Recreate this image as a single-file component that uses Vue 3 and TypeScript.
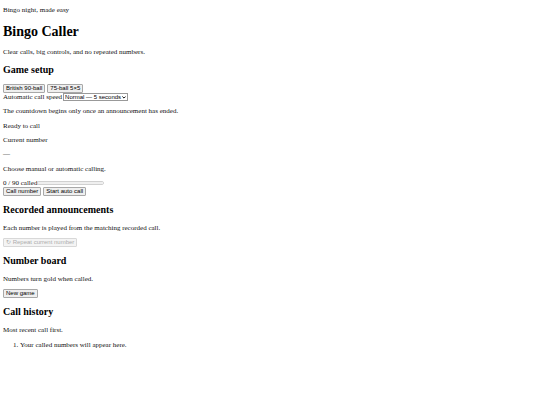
<script setup lang="ts">
import { computed, ref } from 'vue'

const modes = [
  { label: 'British 90-ball', total: 90 },
  { label: '75-ball 5×5', total: 75 },
]
const speeds = [
  { label: 'Fast — 3 seconds', value: 3 },
  { label: 'Normal — 5 seconds', value: 5 },
  { label: 'Slow — 8 seconds', value: 8 },
]

const total = ref(90)
const speed = ref(5)
const called = ref<number[]>([])
const current = computed(() => called.value[0] ?? null)

function newGame(size: number = total.value): void {
  total.value = size
  called.value = []
}

function callNumber(): void {
  const left: number[] = []
  for (let n = 1; n <= total.value; n++) {
    if (!called.value.includes(n)) left.push(n)
  }
  if (left.length) called.value.unshift(left[Math.floor(Math.random() * left.length)])
}
</script>

<template>
  <main class="page">
    <header>
      <p>Bingo night, made easy</p>
      <h1>Bingo Caller</h1>
      <p>Clear calls, big controls, and no repeated numbers.</p>
    </header>

    <section>
      <h2>Game setup</h2>
      <div class="buttons">
        <button v-for="mode in modes" :key="mode.total" type="button" @click="newGame(mode.total)">
          {{ mode.label }}
        </button>
      </div>
      <div class="field">
        <label for="speed">Automatic call speed</label>
        <span class="picker">
          <select id="speed" v-model="speed">
            <option v-for="item in speeds" :key="item.value" :value="item.value">{{ item.label }}</option>
          </select>
          <svg class="chevron" viewBox="0 0 10 7" aria-hidden="true">
            <path d="M1 1l4 4 4-4" fill="none" stroke="#111" stroke-width="2.5" />
          </svg>
        </span>
      </div>
      <p>The countdown begins only once an announcement has ended.</p>
    </section>

    <section class="status">
      <p>Ready to call</p>
      <p>Current number</p>
      <p>{{ current ?? '—' }}</p>
      <div class="calling">
        <p>Choose manual or automatic calling.</p>
        <div class="count">
          <label for="progress">{{ called.length }} / {{ total }} called</label>
          <progress id="progress" :value="called.length" :max="total"></progress>
        </div>
        <div class="buttons">
          <button type="button" @click="callNumber">Call number</button>
          <button type="button">Start auto call</button>
        </div>
      </div>
    </section>

    <section>
      <h2>Recorded announcements</h2>
      <p>Each number is played from the matching recorded call.</p>
      <div class="buttons">
        <button type="button" :disabled="current === null">↻ Repeat current number</button>
      </div>
    </section>

    <section>
      <h2>Number board</h2>
      <p>Numbers turn gold when called.</p>
      <div class="buttons">
        <button type="button" @click="newGame()">New game</button>
      </div>
    </section>

    <section>
      <h2>Call history</h2>
      <p>Most recent call first.</p>
      <ol>
        <li v-if="!called.length">Your called numbers will appear here.</li>
        <li v-for="n in called" :key="n">{{ n }}</li>
      </ol>
    </section>
  </main>
</template>

<style>
body {
  margin: 0;
  background: #fff;
}
</style>

<style scoped>
.page {
  display: flow-root;
  padding: 0 3px;
  color: #111;
  font-family: "Liberation Serif", "Times New Roman", serif;
  font-size: 7px;
  line-height: 8px;
}

p {
  margin: 6px 0;
}

h1 {
  margin: 10px 0 8px;
  color: #000;
  font-size: 14px;
  line-height: 16px;
}

h2 {
  margin: 8px 0;
  color: #000;
  font-size: 10px;
  line-height: 12px;
}

.buttons {
  display: flex;
  gap: 2px;
}

button {
  box-sizing: border-box;
  height: 9px;
  padding: 0 2px;
  border: 1px solid #a8a8a8;
  border-radius: 1px;
  background: #efefef;
  color: #000;
  font-family: "Liberation Sans", Arial, sans-serif;
  font-size: 6px;
  line-height: 7px;
  white-space: nowrap;
}

button:disabled {
  border-color: #d8d8d8;
  background: #f4f4f4;
  color: #adadad;
}

.field {
  display: flex;
  gap: 1px;
}

.picker {
  position: relative;
  display: flex;
}

select {
  appearance: none;
  box-sizing: border-box;
  height: 8px;
  padding: 0 5px 0 1px;
  border: 1px solid #999;
  border-radius: 0;
  background: #fff;
  color: #000;
  font-family: "Liberation Sans", Arial, sans-serif;
  font-size: 6px;
  line-height: 6px;
}

.chevron {
  position: absolute;
  top: 3px;
  right: 2px;
  width: 4px;
  height: 3px;
  pointer-events: none;
}

.status,
.calling {
  margin-top: 7px;
}

.count {
  display: flex;
  align-items: center;
}

progress {
  appearance: none;
  box-sizing: border-box;
  width: 67px;
  height: 4px;
  border: 1px solid #d0d0d0;
  border-radius: 2px;
  background: #efefef;
  overflow: hidden;
}

progress::-webkit-progress-bar {
  background: #efefef;
}

progress::-webkit-progress-value {
  background: #0075ff;
}

ol {
  margin: 7px 0;
  padding-left: 17px;
}
</style>
